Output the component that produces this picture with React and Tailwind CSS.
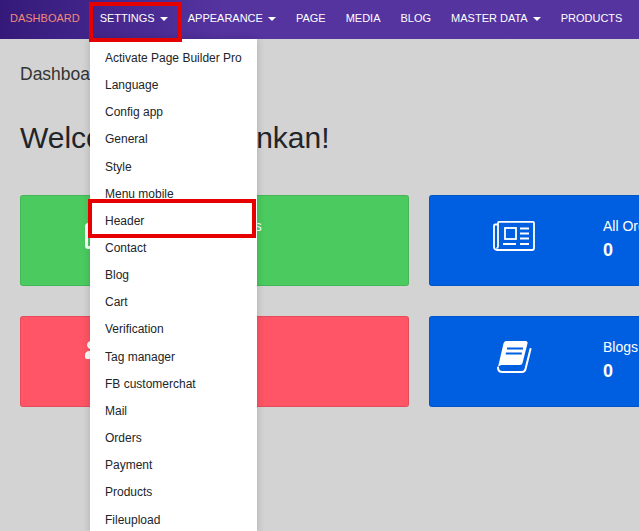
import { FaUsers } from 'react-icons/fa'

const navItems = [
  { label: 'DASHBOARD', active: true },
  { label: 'SETTINGS', caret: true },
  { label: 'APPEARANCE', caret: true },
  { label: 'PAGE' },
  { label: 'MEDIA' },
  { label: 'BLOG' },
  { label: 'MASTER DATA', caret: true },
  { label: 'PRODUCTS' },
]

const settingsMenu = [
  'Activate Page Builder Pro', 'Language', 'Config app', 'General', 'Style', 'Menu mobile',
  'Header', 'Contact', 'Blog', 'Cart', 'Verification', 'Tag manager', 'FB customerchat',
  'Mail', 'Orders', 'Payment', 'Products', 'Fileupload',
]

function NewspaperIcon() {
  return (
    <svg width="42" height="30" viewBox="0 0 42 30" fill="none" stroke="currentColor" strokeWidth="1.8">
      <path d="M5 3.5V1.9A1 1 0 0 1 6 .9H40a1 1 0 0 1 1 1V27a2 2 0 0 1-2 2H4a3 3 0 0 1-3-3V4.5a1 1 0 0 1 1-1H5V25.5a1.5 1.5 0 0 1-1.5 1.5" />
      <rect x="12" y="7" width="11" height="11" />
      <path d="M27 7.5H36M27 12.5H36M27 17.5H36M10 23H23M27 23H36" />
    </svg>
  )
}

function BookIcon() {
  return (
    <svg width="35" height="32" viewBox="0 0 35 32" fill="none">
      <path
        fill="currentColor"
        d="M9 0H28.5a2 2 0 0 1 2 2.6L25.5 22a2.5 2.5 0 0 1-2.4 2H6c-2.2 0-3.8.6-5 2L6.5 2.5C7 1 8 0 9 0z"
      />
      <path d="M10 7.5H26M8.8 12.5H24.8" stroke="#005fe0" strokeWidth="2.2" />
      <path
        d="M1 26.5C1 29.5 3 31 5.5 31H25c2 0 3-1 3.5-3L33.5 8"
        stroke="currentColor"
        strokeWidth="2"
        strokeLinecap="round"
      />
    </svg>
  )
}

function CardIcon() {
  return (
    <svg width="40" height="26" viewBox="0 0 40 26" fill="none" stroke="currentColor" strokeWidth="3">
      <rect x="1.5" y="1.5" width="37" height="23" rx="2" />
    </svg>
  )
}

function StatCard({ color, icon, label, iconPad = 'pb-[10px]' }) {
  return (
    <div className={`flex h-[91px] w-[389px] shrink-0 items-center rounded-[3px] border border-black/10 text-white ${color}`}>
      <div className={`mr-[5px] flex w-[168px] shrink-0 justify-center ${iconPad}`}>{icon}</div>
      <div className="pb-[2px]">
        <p className="text-[14px] leading-[21px]">{label}</p>
        <p className="text-[18px] font-bold leading-[26px]">0</p>
      </div>
    </div>
  )
}

export default function App() {
  return (
    <div className="relative h-[531px] w-[639px] overflow-hidden bg-[#d3d3d3] font-['Liberation_Sans',Arial,sans-serif] text-[#212529]">
      {/* Top navigation */}
      <nav className="flex h-[39px] items-center whitespace-nowrap bg-gradient-to-r from-[#35197a] to-[#5534a0] to-[35%] text-[11px] text-white">
        {navItems.map(item => (
          <a key={item.label} className={`flex h-full shrink-0 items-center px-[10px] pb-[2px] ${item.active ? 'text-[#f08a7a]' : ''}`}>
            {item.label}
            {item.caret && <span className="ml-[5px] mt-[1px] border-x-[4px] border-t-[4px] border-x-transparent border-t-white" />}
          </a>
        ))}
      </nav>

      {/* Page content */}
      <main className="p-5">
        <h2 className="mt-[3px] text-[17.5px] leading-[24px] text-[#333]">Dashboard</h2>
        <h1 className="mt-[34px] text-[30px] leading-[36px]">Welcome Mrs. Bankan!</h1>
        <div className="mt-[39px] flex gap-5">
          <StatCard color="bg-[#4bcb5f]" icon={<CardIcon />} label="Customers" />
          <StatCard color="bg-[#005fe0]" icon={<NewspaperIcon />} label="All Orders" />
        </div>
        <div className="mt-[30px] flex gap-5">
          <StatCard color="bg-[#ff5566]" iconPad="pb-[22px]" icon={<FaUsers className="text-[40px]" />} label="Users" />
          <StatCard color="bg-[#005fe0]" icon={<BookIcon />} label="Blogs" />
        </div>
      </main>

      {/* Settings dropdown */}
      <div className="absolute left-[90px] top-[39px] w-[167px] bg-white pt-[5.875px] text-[12px] text-[#212529] shadow-[0_0_8px_rgba(0,0,0,0.18)]">
        {settingsMenu.map(name => (
          <div key={name} className="px-[15px] leading-[27.15px]">{name}</div>
        ))}
      </div>

      {/* Red highlight boxes */}
      <div className="absolute left-[89px] top-[2px] h-[40px] w-[93px] border-4 border-[#e60000]" />
      <div className="absolute left-[88px] top-[199px] h-[39px] w-[168px] border-4 border-[#e60000]" />
    </div>
  )
}
